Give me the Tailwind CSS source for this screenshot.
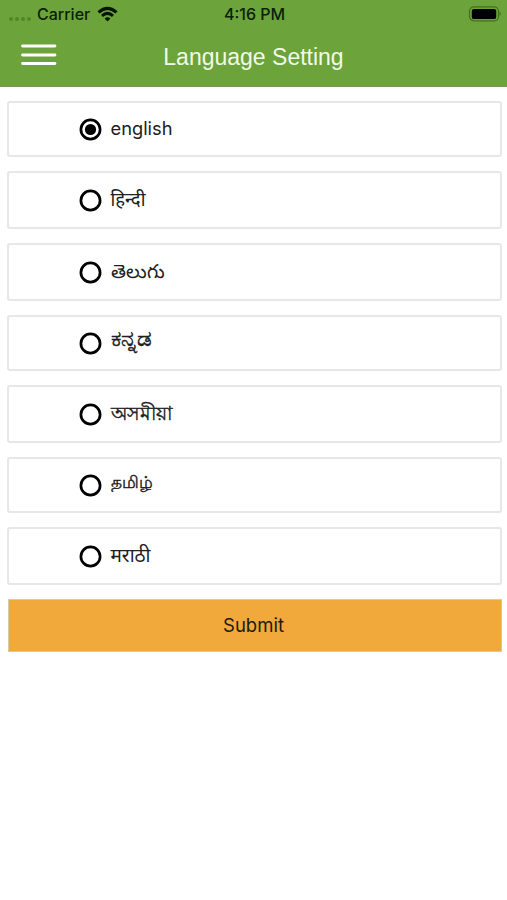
<!DOCTYPE html>
<html lang="en">
<head>
<meta charset="utf-8">
<title>Language Setting</title>
<script src="https://cdn.jsdelivr.net/npm/@tailwindcss/browser@4"></script>
</head>
<body class="bg-white font-['Inter','Noto_Sans',sans-serif] text-[#202020]">
<header class="h-[87px] bg-[#6ca33a] border-b border-[#78945f]">
  <div class="grid grid-cols-3 h-7 items-center text-[16px] leading-7 font-medium text-[#0b2006]">
    <div class="flex items-center pl-[9px]">
      <div class="flex gap-[2.5px] w-7 pt-2.5">
        <i class="size-[3.5px] rounded-full bg-[#528526]"></i><i class="size-[3.5px] rounded-full bg-[#528526]"></i><i class="size-[3.5px] rounded-full bg-[#528526]"></i><i class="size-[3.5px] rounded-full bg-[#528526]"></i>
      </div>
      <span class="w-[54px] whitespace-nowrap">Carrier</span>
      <svg class="ml-1.5 shrink-0" width="21" height="16" viewBox="0 0 21 16" fill="none" stroke="#061402" stroke-width="3"><path d="M1.5 6.3Q10.5-1.6 19.5 6.3M5 9.8Q10.5 4.9 16 9.8"/><path d="M7.6 12.4Q10.5 10 13.4 12.4L10.5 15.4Z" fill="#061402" stroke="none"/></svg>
    </div>
    <div class="text-center whitespace-nowrap pl-0.5">4:16 PM</div>
    <svg class="justify-self-end mr-[5px]" width="34" height="18" viewBox="0 0 34 18"><rect x="1.5" y="1.8" width="29" height="14" rx="4.5" fill="none" stroke="#42701f" stroke-width="1.2"/><rect x="3.8" y="3.9" width="24.4" height="10.2" rx="2.2" fill="#000"/><path d="M31.6 6.3Q34 8.8 31.6 11.3Z" fill="#42701f"/></svg>
  </div>
  <div class="grid grid-cols-[1fr_auto_1fr] h-[58px] items-center">
    <svg class="ml-[21px] -mt-1" width="36" height="22" viewBox="0 0 36 22" stroke="#fff" stroke-width="2.8" stroke-linecap="round"><path d="M1.5 2H34M1.5 11H34M1.5 19.5H34"/></svg>
    <h1 class="font-['Liberation_Sans',sans-serif] text-[23px] leading-7 text-[#f1fae8]">Language Setting</h1>
  </div>
</header>
<main class="pl-[7px] pr-[5px] pt-[14px]">
  <form class="flex flex-col gap-[14px]">
    <label class="flex items-center h-[56px] border-2 border-[#e7e7e7] rounded-[3px] pl-[69.5px] gap-[9px]">
      <svg width="23" height="23" viewBox="0 0 23 23"><circle cx="11.5" cy="11.5" r="9.6" fill="none" stroke="#000" stroke-width="2.7"/><circle cx="11.5" cy="11.5" r="5.6"/></svg>
      <span class="text-[18.3px] leading-7 pb-0.5">english</span></label>
    <label class="flex items-center h-[58px] border-2 border-[#e7e7e7] rounded-[3px] pl-[69.5px] gap-[9px]">
      <svg width="23" height="23" viewBox="0 0 23 23"><circle cx="11.5" cy="11.5" r="9.6" fill="none" stroke="#000" stroke-width="2.7"/></svg>
      <span lang="hi" class="text-[18.5px] leading-7 pb-0.5">हिन्दी</span></label>
    <label class="flex items-center h-[58px] border-2 border-[#e7e7e7] rounded-[3px] pl-[69.5px] gap-[9px]">
      <svg width="23" height="23" viewBox="0 0 23 23"><circle cx="11.5" cy="11.5" r="9.6" fill="none" stroke="#000" stroke-width="2.7"/></svg>
      <span lang="te" class="text-[19.2px] leading-7 pb-0.5">తెలుగు</span></label>
    <label class="flex items-center h-[56px] border-2 border-[#e7e7e7] rounded-[3px] pl-[69.5px] gap-[9px]">
      <svg width="23" height="23" viewBox="0 0 23 23"><circle cx="11.5" cy="11.5" r="9.6" fill="none" stroke="#000" stroke-width="2.7"/></svg>
      <span lang="kn" class="text-[22.5px] leading-7 pb-2.5 [-webkit-text-stroke:0.5px_#202020]">ಕನ್ನಡ</span></label>
    <label class="flex items-center h-[58px] border-2 border-[#e7e7e7] rounded-[3px] pl-[69.5px] gap-[9px]">
      <svg width="23" height="23" viewBox="0 0 23 23"><circle cx="11.5" cy="11.5" r="9.6" fill="none" stroke="#000" stroke-width="2.7"/></svg>
      <span lang="as" class="text-[19px] leading-7 [-webkit-text-stroke:0.4px_#202020]">অসমীয়া</span></label>
    <label class="flex items-center h-[56px] border-2 border-[#e7e7e7] rounded-[3px] pl-[69.5px] gap-[9px]">
      <svg width="23" height="23" viewBox="0 0 23 23"><circle cx="11.5" cy="11.5" r="9.6" fill="none" stroke="#000" stroke-width="2.7"/></svg>
      <span lang="ta" class="text-[17px] leading-7 pb-1.5 [-webkit-text-stroke:0.4px_#202020]">தமிழ்</span></label>
    <label class="flex items-center h-[58px] border-2 border-[#e7e7e7] rounded-[3px] pl-[69.5px] gap-[9px]">
      <svg width="23" height="23" viewBox="0 0 23 23"><circle cx="11.5" cy="11.5" r="9.6" fill="none" stroke="#000" stroke-width="2.7"/></svg>
      <span lang="mr" class="text-[19px] leading-7">मराठी</span></label>
    <button type="button" class="h-[53px] ml-px bg-[#f1a93b] border border-[#d9c9a6] text-[18.5px] text-[#201a10] pr-[3px]">Submit</button>
  </form>
</main>
</body>
</html>
